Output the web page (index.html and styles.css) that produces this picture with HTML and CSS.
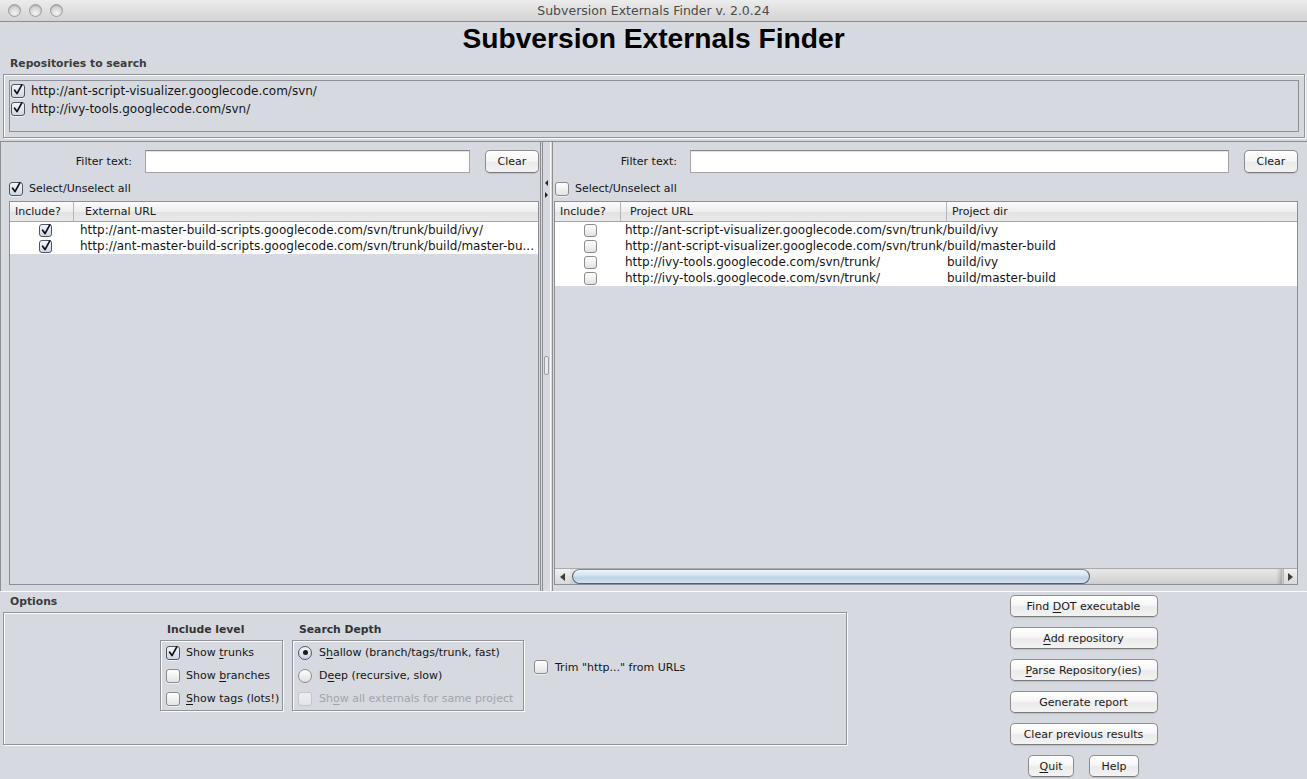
FILE: index.html
```html
<!DOCTYPE html>
<html lang="en">
<head>
<meta charset="utf-8">
<title>Subversion Externals Finder v. 2.0.24</title>
<link rel="stylesheet" href="styles.css">
</head>
<body>
<div class="window">
  <div class="titlebar">
    <div class="lights"><span class="light"></span><span class="light"></span><span class="light"></span></div>
    <div class="wtitle">Subversion Externals Finder v. 2.0.24</div>
    <div></div>
  </div>

  <h1 class="heading">Subversion Externals Finder</h1>

  <div class="section-label">Repositories to search</div>
  <div class="etched repo-box">
    <div class="repo-list">
      <div class="repo-row"><span class="cb checked"><svg viewBox="0 0 12 12"><path d="M2.6 6.2 L5 9.6 L9.8 0.8"/></svg></span><span>http://ant-script-visualizer.googlecode.com/svn/</span></div>
      <div class="repo-row"><span class="cb checked"><svg viewBox="0 0 12 12"><path d="M2.6 6.2 L5 9.6 L9.8 0.8"/></svg></span><span>http://ivy-tools.googlecode.com/svn/</span></div>
    </div>
  </div>

  <div class="split">
    <div class="pane pane-left">
      <div class="filter-row">
        <span class="filter-label">Filter text:</span>
        <div class="input"></div>
        <button class="btn btn-clear">Clear</button>
      </div>
      <div class="select-row"><span class="cb checked"><svg viewBox="0 0 12 12"><path d="M2.6 6.2 L5 9.6 L9.8 0.8"/></svg></span><span>Select/Unselect all</span></div>
      <div class="table">
        <div class="thead cols-left">
          <div class="th th-first">Include?</div>
          <div class="th th-url">External URL</div>
        </div>
        <div class="tbody">
          <div class="tr cols-left">
            <div class="td td-cb"><span class="cb cb-sm checked"><svg viewBox="0 0 12 12"><path d="M2.6 6.2 L5 9.6 L9.8 0.8"/></svg></span></div>
            <div class="td td-url-l">http://ant-master-build-scripts.googlecode.com/svn/trunk/build/ivy/</div>
          </div>
          <div class="tr cols-left">
            <div class="td td-cb"><span class="cb cb-sm checked"><svg viewBox="0 0 12 12"><path d="M2.6 6.2 L5 9.6 L9.8 0.8"/></svg></span></div>
            <div class="td td-url-l">http://ant-master-build-scripts.googlecode.com/svn/trunk/build/master-bu...</div>
          </div>
        </div>
      </div>
    </div>

    <div class="divider">
      <span class="arrow arrow-left"></span>
      <span class="arrow arrow-right"></span>
      <span class="grip"></span>
    </div>

    <div class="pane pane-right">
      <div class="filter-row">
        <span class="filter-label">Filter text:</span>
        <div class="input"></div>
        <button class="btn btn-clear">Clear</button>
      </div>
      <div class="select-row select-row-right"><span class="cb"></span><span>Select/Unselect all</span></div>
      <div class="table">
        <div class="thead cols-right">
          <div class="th th-first">Include?</div>
          <div class="th th-purl">Project URL</div>
          <div class="th th-dir">Project dir</div>
        </div>
        <div class="tbody">
          <div class="tr cols-right">
            <div class="td td-cb"><span class="cb cb-sm"></span></div>
            <div class="td td-purl">http://ant-script-visualizer.googlecode.com/svn/trunk/</div>
            <div class="td td-dir">build/ivy</div>
          </div>
          <div class="tr cols-right">
            <div class="td td-cb"><span class="cb cb-sm"></span></div>
            <div class="td td-purl">http://ant-script-visualizer.googlecode.com/svn/trunk/</div>
            <div class="td td-dir">build/master-build</div>
          </div>
          <div class="tr cols-right">
            <div class="td td-cb"><span class="cb cb-sm"></span></div>
            <div class="td td-purl">http://ivy-tools.googlecode.com/svn/trunk/</div>
            <div class="td td-dir">build/ivy</div>
          </div>
          <div class="tr cols-right">
            <div class="td td-cb"><span class="cb cb-sm"></span></div>
            <div class="td td-purl">http://ivy-tools.googlecode.com/svn/trunk/</div>
            <div class="td td-dir">build/master-build</div>
          </div>
        </div>
        <div class="hscroll">
          <div class="sb-arrow sb-arrow-left"><span></span></div>
          <div class="sb-track"><div class="sb-thumb"></div></div>
          <div class="sb-arrow sb-arrow-right"><span></span></div>
        </div>
      </div>
    </div>
  </div>

  <div class="bottom">
    <div class="options">
      <div class="section-label">Options</div>
      <div class="etched options-box">
        <div class="cluster">
          <div class="group">
            <div class="group-label">Include level</div>
            <div class="etched group-box group-include">
              <div class="opt"><span class="cb checked"><svg viewBox="0 0 12 12"><path d="M2.6 6.2 L5 9.6 L9.8 0.8"/></svg></span><span>Show <u>t</u>runks</span></div>
              <div class="opt"><span class="cb"></span><span>Show <u>b</u>ranches</span></div>
              <div class="opt"><span class="cb"></span><span><u>S</u>how tags (lots!)</span></div>
            </div>
          </div>
          <div class="group">
            <div class="group-label">Search Depth</div>
            <div class="etched group-box group-depth">
              <div class="opt"><span class="radio on"></span><span>S<u>h</u>allow (branch/tags/trunk, fast)</span></div>
              <div class="opt"><span class="radio"></span><span>D<u>e</u>ep (recursive, slow)</span></div>
              <div class="opt disabled"><span class="cb"></span><span>Sh<u>o</u>w all externals for same project</span></div>
            </div>
          </div>
          <div class="opt trim"><span class="cb"></span><span>Trim "http..." from URLs</span></div>
        </div>
      </div>
    </div>
    <div class="actions">
      <button class="btn btn-action">Find <u>D</u>OT executable</button>
      <button class="btn btn-action"><u>A</u>dd repository</button>
      <button class="btn btn-action"><u>P</u>arse Repository(ies)</button>
      <button class="btn btn-action">Generate report</button>
      <button class="btn btn-action">Clear previous results</button>
      <div class="action-row">
        <button class="btn btn-quit"><u>Q</u>uit</button>
        <button class="btn btn-help">Help</button>
      </div>
    </div>
  </div>
</div>
</body>
</html>
```

FILE: styles.css
```css
* { box-sizing: border-box; }

html, body {
  margin: 0;
  padding: 0;
  width: 1307px;
  height: 779px;
  overflow: hidden;
  background: #d6d9df;
}

body {
  font-family: "DejaVu Sans", "Noto Sans", sans-serif;
  font-size: 11px;
  color: #151515;
}

.window {
  width: 1307px;
  height: 779px;
  background: #d6d9df;
}

/* ---------- title bar ---------- */
.titlebar {
  height: 22px;
  display: grid;
  grid-template-columns: 1fr auto 1fr;
  align-items: center;
  background: linear-gradient(#ececec, #d3d3d3);
  border-bottom: 1px solid #8d8d8d;
}

.lights {
  display: flex;
  gap: 8px;
  padding-left: 8px;
}

.light {
  width: 13px;
  height: 13px;
  border-radius: 50%;
  border: 1px solid #9d9d9d;
  background: radial-gradient(circle at 50% 75%, #f4f4f4 0%, #dcdcdc 45%, #bdbdbd 100%);
  box-shadow: inset 0 1px 1px rgba(0,0,0,0.15);
}

.wtitle {
  font-size: 12.5px;
  color: #4b4b4b;
  line-height: 21px;
}

/* ---------- heading ---------- */
.heading {
  margin: 0;
  font-family: "Liberation Sans", Arial, sans-serif;
  font-weight: bold;
  font-size: 28.2px;
  line-height: 32px;
  text-align: center;
  color: #000;
}

.section-label {
  margin-top: 3px;
  padding-left: 10px;
  font-weight: bold;
  font-size: 10.8px;
  line-height: 14px;
  color: #3c3c3c;
}

.etched {
  border: 1px solid #919398;
  box-shadow: inset 1px 1px 0 #fbfbfc, 1px 1px 0 #fbfbfc;
}

/* ---------- repositories ---------- */
.repo-box {
  margin: 3px 2px 0 3px;
  padding: 5px;
}

.repo-list {
  height: 52px;
  padding-top: 1px;
  border: 1px solid #8c8f95;
}

.repo-row {
  height: 18px;
  display: flex;
  align-items: center;
  gap: 6px;
  padding-left: 1px;
  font-size: 12px;
}

/* ---------- checkboxes / radios ---------- */
.cb {
  flex: none;
  position: relative;
  display: inline-block;
  width: 14px;
  height: 14px;
  border: 1px solid #8b8b8b;
  border-radius: 3px;
  background: linear-gradient(#ffffff, #f1f1f1 50%, #e3e3e3 100%);
  box-shadow: 0 1px 0 rgba(255,255,255,0.6);
}

.cb.checked {
  border-color: #4f5660;
  background: linear-gradient(#f3f6fa, #dfe6ee 55%, #cdd7e3 100%);
}

.cb svg {
  position: absolute;
  left: 0;
  top: -1px;
  width: 12px;
  height: 12px;
  overflow: visible;
}

.cb svg path {
  fill: none;
  stroke: #111;
  stroke-width: 1.7;
  stroke-linecap: round;
  stroke-linejoin: round;
}

.cb-sm {
  width: 13px;
  height: 13px;
}

.radio {
  flex: none;
  position: relative;
  display: inline-block;
  width: 14px;
  height: 14px;
  border: 1px solid #8b8b8b;
  border-radius: 50%;
  background: linear-gradient(#ffffff, #eeeeee 50%, #e0e0e0 100%);
}

.radio.on {
  border-color: #4f5660;
  background: linear-gradient(#f3f6fa, #dde4ee 55%, #c9d4e1 100%);
}

.radio.on::after {
  content: "";
  position: absolute;
  left: 3.5px;
  top: 3.5px;
  width: 5px;
  height: 5px;
  border-radius: 50%;
  background: #1b1b1b;
}

/* ---------- split pane ---------- */
.split {
  margin-top: 3px;
  height: 451px;
  display: flex;
  border-top: 1px solid #8c8e93;
  border-bottom: 1px solid #fbfbfc;
}

.pane {
  display: flex;
  flex-direction: column;
}

.pane-left {
  width: 541px;
  flex: none;
  border-left: 1px solid #8c8e93;
  border-right: 1px solid #8c8e93;
  padding: 8px 1px 6px 8px;
}

.pane-right {
  flex: 1;
  padding: 8px 9px 6px 1px;
}

.filter-row {
  height: 23px;
  display: flex;
  align-items: center;
}

.filter-label {
  width: 123px;
  flex: none;
  text-align: right;
  margin-right: 13px;
}

.input {
  flex: 1;
  height: 23px;
  background: #fff;
  border: 1px solid #a4a4a4;
  border-top-color: #878787;
  box-shadow: inset 0 1px 1px rgba(0,0,0,0.12);
}

.btn {
  font-family: "DejaVu Sans", "Noto Sans", sans-serif;
  font-size: 11px;
  color: #1a1a1a;
  padding: 0;
  border: 1px solid #8e8e8e;
  border-bottom-color: #7a7a7a;
  border-radius: 5px;
  background: linear-gradient(#ffffff, #f6f6f6 45%, #ebebeb 55%, #f3f3f3 100%);
  box-shadow: 0 1px 1px rgba(0,0,0,0.12);
  text-align: center;
}

.btn u { text-decoration-thickness: 1px; text-underline-offset: 2px; }

.btn-clear {
  flex: none;
  width: 54px;
  height: 23px;
  margin-left: 15px;
}

.select-row {
  height: 28px;
  padding-top: 3px;
  display: flex;
  align-items: center;
  gap: 6px;
}

.select-row-right {
  padding-left: 1px;
}

/* ---------- tables ---------- */
.table {
  flex: 1;
  display: flex;
  flex-direction: column;
  border: 1px solid #8c8f95;
  background: #d6d9df;
  min-height: 0;
}

.thead {
  height: 20px;
  flex: none;
  display: grid;
  border-bottom: 1px solid #a3a5a9;
  background: linear-gradient(#fbfbfb, #eeeeee 50%, #e2e2e2 51%, #e9e9e9 100%);
}

.cols-left { display: grid; grid-template-columns: 64px 1fr; }
.cols-right { display: grid; grid-template-columns: 66px 326px 1fr; }

.th {
  line-height: 19px;
  white-space: nowrap;
  overflow: hidden;
  color: #1a1a1a;
}

.th-first { padding-left: 5px; border-right: 1px solid #b3b5b9; }
.th-url { padding-left: 11px; }
.th-purl { padding-left: 9px; border-right: 1px solid #b3b5b9; }
.th-dir { padding-left: 5px; }

.tbody {
  flex: 1;
}

.tr {
  height: 16px;
  background: #fff;
}

.td {
  font-size: 12px;
  line-height: 16px;
  white-space: nowrap;
}

.td-cb {
  display: flex;
  align-items: center;
  padding-left: 29px;
}

.td-url-l { padding-left: 6px; overflow: hidden; }
.td-purl { padding-left: 4px; }
.td-dir { padding-left: 0; }

/* scrollbar */
.hscroll {
  height: 16px;
  flex: none;
  display: flex;
  border-top: 1px solid #a9abae;
  background: linear-gradient(#f2f2f2, #e4e4e4 50%, #d9d9d9 100%);
}

.sb-arrow {
  flex: none;
  display: flex;
  align-items: center;
  justify-content: center;
}

.sb-arrow-left { width: 15px; }
.sb-arrow-right { width: 14px; border-left: 1px solid #b8b8b8; }

.sb-arrow span {
  width: 0;
  height: 0;
  border-top: 4px solid transparent;
  border-bottom: 4px solid transparent;
}

.sb-arrow-left span { border-right: 5px solid #3e3e3e; }
.sb-arrow-right span { border-left: 5px solid #3e3e3e; }

.sb-track {
  flex: 1;
  padding-left: 2px;
  background: linear-gradient(#e9e9e9, #dcdcdc 50%, #cfcfcf 100%);
  border-right: 1px solid #c9c9c9;
  box-shadow: inset -5px 0 4px -3px rgba(0,0,0,0.25);
}

.sb-thumb {
  width: 518px;
  height: 15px;
  border: 1px solid #4f6070;
  border-top-color: #7b8c9c;
  border-radius: 8px;
  background: linear-gradient(#eef4f9, #d6e4f0 40%, #bcd2e5 60%, #d3e2ef 100%);
}

/* divider */
.divider {
  position: relative;
  width: 12px;
  flex: none;
  background: linear-gradient(to right,
    transparent 0 1px, #8c8e93 1px 2px, transparent 2px 9px,
    #fbfbfc 9px 10px, transparent 10px 11px, #8c8e93 11px 12px);
}

.arrow {
  position: absolute;
  left: 4px;
  width: 0;
  height: 0;
  border-top: 3px solid transparent;
  border-bottom: 3px solid transparent;
}

.arrow-left { top: 38px; border-right: 3px solid #222; }
.arrow-right { top: 50px; border-left: 3px solid #222; }

.grip {
  position: absolute;
  left: 3px;
  top: 214px;
  width: 5px;
  height: 19px;
  border: 1px solid #9a9ca1;
  border-radius: 2px;
  background: #e6e8ec;
}

/* ---------- bottom area ---------- */
.bottom {
  display: flex;
}

.options {
  width: 848px;
  flex: none;
}

.options-box {
  margin: 3px 0 0 3px;
  width: 844px;
  height: 133px;
  padding: 10px 0 0 156px;
}

.cluster {
  display: flex;
  justify-content: flex-start;
  align-items: center;
}

.group + .group { margin-left: 9px; }

.group-label {
  font-weight: bold;
  font-size: 10.8px;
  line-height: 14px;
  color: #333;
  padding-left: 7px;
  margin-bottom: 3px;
}

.group-box {
  padding: 0 0 0 5px;
  overflow: hidden;
}

.group-include { width: 123px; }
.group-depth { width: 232px; }

.opt {
  height: 23px;
  display: flex;
  align-items: center;
  gap: 6px;
  white-space: nowrap;
}

.group-depth .opt { gap: 7px; }

.opt u { text-underline-offset: 2px; }

.opt.disabled { color: #a3a5a9; }
.opt.disabled .cb {
  border-color: #c3c5c9;
  background: linear-gradient(#eceef1, #e2e4e8);
  box-shadow: none;
}

.trim {
  margin-left: 10px;
  gap: 7px;
}

.actions {
  flex: 1;
  display: flex;
  flex-direction: column;
  align-items: center;
  gap: 10px;
  padding: 3px 0 0 12px;
}

.btn-action {
  width: 148px;
  height: 22px;
}

.action-row {
  display: flex;
  gap: 15px;
}

.btn-quit { width: 46px; height: 22px; }
.btn-help { width: 50px; height: 22px; }
```
